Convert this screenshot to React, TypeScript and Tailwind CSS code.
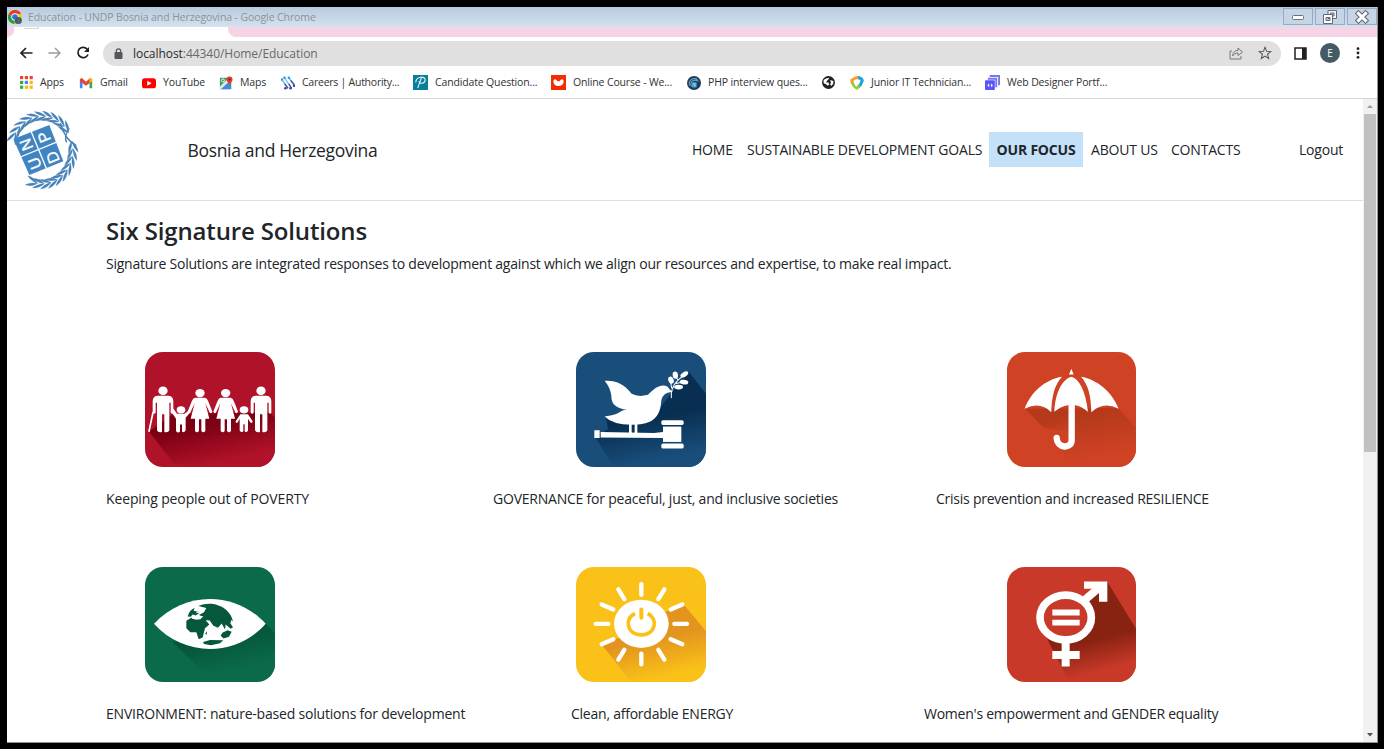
import React from "react";

type IconProps = { children: React.ReactNode; box?: string; className?: string };
const Glyph = ({ children, box = "0 0 16 16", className = "h-4 w-4" }: IconProps) => (
  <svg viewBox={box} className={`shrink-0 ${className}`} fill="none">{children}</svg>
);

function Laurel() {
  const leaves: React.ReactNode[] = [];
  const add = (from: number, to: number, n: number, dir: number, key: string) => {
    for (let i = 0; i < n; i++) {
      const a = from + ((to - from) * i) / (n - 1);
      const r = (a * Math.PI) / 180;
      const x = 126 + 92 * Math.cos(r);
      const y = 453 + 101 * Math.sin(r);
      leaves.push(
        <g key={key + i} transform={`translate(${x.toFixed(1)} ${y.toFixed(1)}) rotate(${a + 90 * dir + 180})`}>
          <path d="M-12 0 Q2 -15 22 -14 Q9 -2 -12 0ZM-12 0 Q2 15 22 14 Q9 2 -12 0Z" />
        </g>
      );
    }
  };
  add(204, 322, 10, 1, "a");
  add(-8, 106, 10, -1, "b");
  return <g fill="#4682b8" stroke="#4682b8" strokeWidth="1">{leaves}</g>;
}

const Logo = () => (
  <svg viewBox="21 330 216 243" className="h-[81px] w-[72px] shrink-0">
    <Laurel />
    <path d="M181 372Q194 422 229 440M208 388Q190 414 200 430" stroke="#4682b8" strokeWidth="4" fill="none" />
    <path d="M40 420L148 378L190 487L88 528Z" fill="#4084c2" />
    <path d="M94 399L139 508M61 474L168 430" stroke="#fff" strokeWidth="4" />
    <g fill="#fff" stroke="#fff" strokeWidth="1" fontFamily="Liberation Sans" fontSize="48" textAnchor="middle">
      <text transform="translate(120 487) rotate(-111)">U</text>
      <text transform="translate(94 431) rotate(-111)">N</text>
      <text transform="translate(174 469) rotate(-111)">D</text>
      <text transform="translate(148 408) rotate(-111)">P</text>
    </g>
  </svg>
);

const Tile = ({ x, w = 390, fill, id, children }: { x: number; w?: number; fill: string; id: string; children: React.ReactNode }) => (
  <svg viewBox={`${x} 36 ${w} 344`} preserveAspectRatio="none" className={w === 390 ? "h-[115px] w-[130px]" : "h-[115px] w-[129px]"}>
    <defs><clipPath id={id}><rect x={x} y="36" width={w} height="344" rx="54" /></clipPath></defs>
    <g clipPath={`url(#${id})`}>
      <rect x={x} y="36" width={w} height="344" fill={fill} />
      {children}
    </g>
  </svg>
);

const Fade = ({ id, from, to, y1, y2 }: { id: string; from: string; to: string; y1: number; y2: number }) => (
  <linearGradient id={id} gradientUnits="userSpaceOnUse" x1="240" y1={y1} x2="265" y2={y2}>
    <stop offset="0" stopColor={from} /><stop offset="1" stopColor={to} />
  </linearGradient>
);

const Man = ({ x }: { x: number }) => (
  <g transform={`translate(${x} 0)`}>
    <ellipse cx="0" cy="152" rx="14" ry="13" />
    <path d="M-17 167H17Q31 169 31 184V218Q28 224 23 218V188H19V270Q16 278 4 275V222H-3V275Q-15 278 -18 270V188H-22V218Q-27 224 -31 218V184Q-31 169 -17 167Z" />
  </g>
);
const Woman = ({ x }: { x: number }) => (
  <g transform={`translate(${x} 0)`}>
    <ellipse cx="0" cy="159" rx="14" ry="12" />
    <path d="M-15 173H15Q21 174 25 184L37 214Q34 222 29 217L16 189L28 236H16V272Q10 280 4 272V237H-3V272Q-9 280 -15 272V236H-28L-16 189L-29 217Q-34 222 -37 214L-25 184Q-21 174 -15 173Z" />
  </g>
);

const Poverty = () => (
  <Tile x={45} fill="#b01229" id="t1">
    <defs><Fade id="g1" from="#7b0013" to="#b01229" y1={250} y2={365} /></defs>
    <path d="M57 274L132 370L435 385V234L420 216L130 222Z" fill="url(#g1)" />
    <g fill="#fff">
      <Man x={99} /><Woman x={210} /><Woman x={287} /><Man x={393} />
      <ellipse cx="153" cy="209" rx="13" ry="11" />
      <path d="M130 205L141 221H164L177 210L181 216L167 233V271Q161 280 156 274V253H150V274Q143 280 138 272V236L124 215Z" />
      <ellipse cx="342" cy="209" rx="13" ry="11" />
      <path d="M331 222H354L368 243Q367 251 361 247L354 236V271Q349 279 344 273V252H340V273Q334 279 329 271V236L323 247Q316 251 317 243Z" />
      <path d="M69 217L57 273" stroke="#fff" strokeWidth="5" strokeLinecap="round" />
    </g>
  </Tile>
);

const Governance = () => (
  <Tile x={46} fill="#194e7b" id="t2">
    <defs><Fade id="g2" from="#082f51" to="#194e7b" y1={240} y2={365} /></defs>
    <path d="M104 292L160 380L440 385V166L384 94L300 200L136 232L142 266Z" fill="url(#g2)" />
    <g fill="#fff">
      <path d="M132 122C166 120 191 132 213 161Q233 172 262 164C283 143 301 130 321 140Q326 150 336 154L319 159Q302 166 301 190C298 226 278 250 231 253Q159 257 132 229Q160 226 174 218Q188 207 200 209C167 205 151 193 152 166Q148 141 132 122Z" />
      <path d="M205 250H213V278H205ZM222 250H230V278H222ZM101 270H117V293H101ZM120 275L280 278L307 275V293L120 292Z" />
      <rect x="302" y="240" width="67" height="14" rx="5" /><rect x="307" y="259" width="55" height="46" /><rect x="302" y="310" width="67" height="15" rx="5" />
      {[[371, 103, -32], [344, 105, 10], [331, 120, 20], [370, 126, 8], [354, 141, 0]].map(([x, y, a], i) => (
        <ellipse key={i} cx={x} cy={y} rx={i === 1 || i === 2 ? 8 : 13} ry={i === 1 || i === 2 ? 11 : 7} transform={`rotate(${i === 1 || i === 2 ? -a : a} ${x} ${y})`} />
      ))}
      <path d="M332 174Q328 144 352 120L376 100M333 144L329 122M352 120L345 108M345 130L370 126M338 140L354 141" stroke="#fff" strokeWidth="3" fill="none" />
    </g>
  </Tile>
);

const Resilience = () => (
  <Tile x={51} w={387} fill="#cf4224" id="t3">
    <defs>
      <Fade id="g3" from="#b5391b" to="#cf4224" y1={230} y2={360} />
      <Fade id="g3b" from="#b5391b" to="#cf4224" y1={215} y2={275} />
    </defs>
    <path d="M105 206L162 264L240 275V205Z" fill="url(#g3b)" />
    <path d="M205 322L250 375L440 380V266L384 203L250 205V310Z" fill="url(#g3)" />
    <path d="M104 206C121 158 165 118 216 110C193 135 185 170 184 216Q150 182 104 206ZM386 206C368 158 323 118 273 110C296 135 303 170 304 216Q340 182 386 206ZM244 110Q282 121 294 215Q276 198 256 195H234Q211 198 193 215C195 168 211 120 244 110ZM237 103L244 86L251 103Z" fill="#fff" />
    <path d="M245 192V300C245 326 202 326 200 293" stroke="#fff" strokeWidth="19" strokeLinecap="round" fill="none" />
  </Tile>
);

const Environment = () => (
  <Tile x={45} fill="#0b6a49" id="t4">
    <defs><Fade id="g4" from="#04543a" to="#0b6a49" y1={245} y2={355} /></defs>
    <path d="M125 258L240 370L440 365V240L408 206L260 270Z" fill="url(#g4)" />
    <path d="M72 206C164 106 318 108 407 206C318 307 160 305 72 206Z" fill="#fff" />
    <g fill="#06583d">
      <path d="M205 153C251 132 304 160 309 200L304 194L301 204L309 216L302 221L287 208L285 223L275 205L264 218L250 212L239 196L227 195L238 208L225 219L218 247L206 252L199 231L181 231L169 219V197L184 188L197 194L211 192L220 183L204 181L222 171L229 159Z" />
      <path d="M173 184Q178 164 194 159L191 167L204 170L195 174L208 173L198 181L187 178L183 185ZM277 233L293 225L305 230L297 245L281 250L272 242ZM219 260L240 254L280 255L270 264L243 270L222 266ZM225 236L231 228L230 239Z" />
    </g>
    <path d="M187 190L203 190M198 181L211 182" stroke="#fff" strokeWidth="3" />
  </Tile>
);

const Energy = () => (
  <Tile x={46} fill="#fac218" id="t5">
    <defs><Fade id="g5" from="#e3941f" to="#fac218" y1={260} y2={375} /></defs>
    <path d="M123 268L215 385H440V233L369 148L315 170L240 240L165 250Z" fill="url(#g5)" />
    <ellipse cx="242" cy="206" rx="82" ry="72" fill="#fff" />
    <path d="M242 87V119M242 295V327M105 206H143M341 206H379M173 103L191 132M311 103L293 132M123 148L158 163M365 148L330 163M123 267L158 252M365 267L330 252M173 313L191 284M311 313L293 284" stroke="#fff" strokeWidth="13" strokeLinecap="round" />
    <path d="M223 175C189 190 199 239 242 239S294 190 261 175" stroke="#fac218" strokeWidth="11" fill="none" />
    <path d="M242 163V188" stroke="#fac218" strokeWidth="12" strokeLinecap="round" />
  </Tile>
);

const Gender = () => (
  <Tile x={51} w={387} fill="#c83929" id="t6">
    <defs><Fade id="g6" from="#882211" to="#c83929" y1={272} y2={365} /></defs>
    <path d="M172 252L240 385H440V224L352 80L295 125L315 187L240 260Z" fill="url(#g6)" />
    <ellipse cx="227" cy="187" rx="77" ry="67" fill="#c83929" stroke="#fff" strokeWidth="23" />
    <path d="M285 134L334 92M227 259V334M187 299H269" stroke="#fff" strokeWidth="24" />
    <path d="M282 79H352V140H327V101H282ZM187 163H269V181H187ZM187 194H269V211H187Z" fill="#fff" />
  </Tile>
);

const Bookmark = ({ icon, label, className }: { icon: React.ReactNode; label?: string; className: string }) => (
  <div className={`flex shrink-0 items-center gap-[7px] ${className}`}>{icon}{label && <span className="whitespace-nowrap">{label}</span>}</div>
);

const Chrome = ({ className }: { className: string }) => (
  <Glyph className={className}>
    <circle cx="8" cy="8" r="8" fill="#fac116" />
    <path d="M1 4A8 8 0 0 1 15 4L8 5L5 9Z" fill="#e63b2e" />
    <path d="M1 4L5 10L8 12L7 16A8 8 0 0 1 1 4Z" fill="#269c4b" />
    <circle cx="8" cy="8" r="4.2" fill="#fff" /><circle cx="8" cy="8" r="3.2" fill="#2874dc" />
    <circle cx="11.8" cy="12" r="4" fill="#435966" /><path d="M11 10H13M11 12H13M11 14H13" stroke="#71858f" />
  </Glyph>
);

const bookmarks = [
  { label: "Apps", w: "w-[59px]", icon: <Glyph className="h-[13px] w-[13px]" box="0 0 13 13">
    {["#e94335", "#e94335", "#e94335", "#34a853", "#4285f4", "#fbbc04", "#34a853", "#fbbc04", "#fbbc04"].map((c, i) => <rect key={i} x={(i % 3) * 4.8} y={Math.floor(i / 3) * 4.8} width="3.2" height="3.2" fill={c} />)}
  </Glyph> },
  { label: "Gmail", w: "w-[63px]", icon: <Glyph className="h-[14px] w-[14px]">
    <path d="M1 14V4H4V14Z" fill="#4285f4" /><path d="M12 14V4H15V14Z" fill="#34a853" /><path d="M1 4L3 2L8 6.5L13 2L15 4V6L8 11L1 6Z" fill="#ea4335" /><path d="M12 5V3.5L13.5 2L15 4V6L12 8Z" fill="#fbbc04" />
  </Glyph> },
  { label: "YouTube", w: "w-[77px]", icon: <Glyph className="h-[14px] w-[14px]">
    <rect x="0" y="2.5" width="16" height="11.5" rx="3" fill="#f00" /><path d="M6 5.5L11 8.2L6 11Z" fill="#fff" />
  </Glyph> },
  { label: "Maps", w: "w-[62px]", icon: <Glyph className="h-[14px] w-[14px]">
    <rect x="1" y="2" width="13" height="13" fill="#34a05b" /><path d="M5 15L13 7V15Z" fill="#4285f4" /><path d="M1 12L11 2L14 5L4 15H1Z" fill="#e6e8df" /><path d="M2 15L13 5L14 7L6 15Z" fill="#4b84df" /><path d="M12 11C12 8 8.5 7 8.5 4A3.5 3.5 0 0 1 15.5 4C15.5 7 12 8 12 11Z" fill="#df3f31" /><circle cx="12" cy="4" r="1.2" fill="#8d1919" /><circle cx="4.5" cy="5" r="1.7" stroke="#fff" />
  </Glyph> },
  { label: "Careers | Authority...", w: "w-[132px] tracking-[-0.25px]", icon: <Glyph className="h-[14px] w-[14px]">
    <path d="M1 4L8 14M4 2L12 14M9 2L15 10" stroke="#67b9e9" strokeWidth="1.5" /><path d="M4 9L8 14M9 9L12 14M11 5L15 10" stroke="#4b4b9e" strokeWidth="1.5" />
    {[[1, 4], [4, 2], [9, 2]].map(([x, y], i) => <circle key={i} cx={x} cy={y} r="1.5" fill="#2b9ee1" />)}{[[5, 14], [11, 14], [15, 11]].map(([x, y], i) => <circle key={i} cx={x} cy={y} r="1.5" fill="#443f8e" />)}
  </Glyph> },
  { label: "Candidate Question...", w: "w-[138px]", icon: <Glyph className="h-[15px] w-[15px]">
    <path d="M0 0H16V16H0Z" fill="#087e99" /><path d="M3 8C3 1 13 1 13 5S8 10 6 7M9 3L5 14" stroke="#d5f3f7" strokeWidth="1.2" />
  </Glyph> },
  { label: "Online Course - We...", w: "w-[136px]", icon: <Glyph className="h-[15px] w-[15px]">
    <path d="M0 0H16V16H0Z" fill="#f32c04" /><path d="M2.5 6Q4 3.5 6 5.5Q8 8 10 5.5Q12 3.5 13.5 6Q13.5 11.8 8 11.8T2.5 6Z" fill="#fff" />
  </Glyph> },
  { label: "PHP interview ques...", w: "w-[135px]", icon: <Glyph className="h-[14px] w-[14px]">
    <circle cx="8" cy="8" r="8" fill="#203c54" /><path d="M3 11C1 5 7 1 12 4M5 12C3 6 8 3 13 6" stroke="#6ea6cb" strokeWidth="1.2" /><rect x="5.5" y="7" width="5.5" height="6" rx="1" fill="#46a2de" /><path d="M7 9H9V12" stroke="#a8dcff" />
  </Glyph> },
  { label: "", w: "w-[28px]", icon: <Glyph className="h-[13px] w-[13px]">
    <circle cx="8" cy="8" r="8" fill="#202124" /><path d="M2 5L5 3L9 2L8 4L6 6L5 8H8L9 10L7 12L5 10L2 9ZM10 5L14 6V9L12 12L10 11L11 8Z" fill="#fff" />
  </Glyph> },
  { label: "Junior IT Technician...", w: "w-[135px]", icon: <Glyph className="h-[14px] w-[14px]">
    <path d="M3 9L2 5Q7 1 11 2" stroke="#ff9e25" strokeWidth="3.5" /><path d="M9 2Q13 2 14 5L12 10L9 13" stroke="#16a9dd" strokeWidth="3.5" /><path d="M2 7L5 12L8 14L11 11" stroke="#9acd36" strokeWidth="3" />
  </Glyph> },
  { label: "Web Designer Portf...", w: "w-[140px]", icon: <Glyph className="h-[15px] w-[15px]">
    <path d="M5 0H16V11H14V2H5ZM3 3H13V13H11V5H3Z" fill="#7776ee" /><rect x="0" y="5.5" width="10.5" height="10.5" rx="1" fill="#5a54f5" /><path d="M4.5 9L2.5 11L4.5 13ZM6.5 9L8.5 11L6.5 13Z" fill="#fff" />
  </Glyph> },
];

function BrowserBars() {
  return <>
    <div className="flex h-5 shrink-0 items-center bg-linear-to-b from-[#b7cadd] to-[#d5e2ef] pl-px">
      <Chrome className="h-[14px] w-[14px]" />
      <span className="ml-[6px] pt-px font-['Open_Sans',sans-serif] text-[10.5px] tracking-[-0.1px] text-[#8d9399]">Education - UNDP Bosnia and Herzegovina - Google Chrome</span>
      <div className="ml-auto flex gap-[2px] self-stretch pt-px">
        <div className="flex h-[17px] w-[30px] items-center justify-center border border-[#99a9c3] bg-[#c5d5e6]"><Glyph className="h-3 w-4" box="0 0 16 12"><rect x="2.5" y="4.5" width="11" height="4" rx="1" fill="#fff" stroke="#687280" /></Glyph></div>
        <div className="flex h-[17px] w-[30px] items-center justify-center border border-[#99a9c3] bg-[#c5d5e6]"><Glyph><path d="M6 1.5H14.5V9.5H6ZM8.5 4H12V7H8.5Z" fill="#f3f6fa" stroke="#5f6977" fillRule="evenodd" /><path d="M1.5 5.5H10.5V14.5H1.5ZM4 8.5H8V11.5H4Z" fill="#fff" stroke="#5f6977" fillRule="evenodd" /></Glyph></div>
        <div className="flex h-[17px] w-[30px] items-center justify-center border border-[#99a9c3] bg-[#c5d5e6] pr-px"><Glyph className="h-[14px] w-[14px]"><path d="M4 4L12 12M12 4L4 12" stroke="#5f6977" strokeWidth="6" strokeLinecap="square" /><path d="M4 4L12 12M12 4L4 12" stroke="#fff" strokeWidth="3.6" strokeLinecap="square" /></Glyph></div>
      </div>
    </div>
    <div className="flex h-[10px] shrink-0 justify-between bg-white">
      <div className="w-[7px] rounded-br-lg bg-[#f7d4e5]" />
      <div className="mr-auto ml-[10px] h-[2px] w-[15px] border-r border-b border-[#d3d7e1]" />
      <div className="w-[1149px] rounded-bl-lg bg-[#f7d4e5]" />
    </div>
    <div className="flex h-[31px] shrink-0 items-center pt-px pl-[13px]">
      <Glyph className="h-3 w-[13px]" box="0 0 13 12"><path d="M12.5 6H1.2M6 1L1 6L6 11" stroke="#202124" strokeWidth="1.7" /></Glyph>
      <Glyph className="ml-[15px] h-3 w-[13px]" box="0 0 13 12"><path d="M0.5 6H11.8M7 1L12 6L7 11" stroke="#97999c" strokeWidth="1.4" /></Glyph>
      <Glyph className="ml-[15px] h-[14px] w-[14px]" box="0 0 14 14"><path d="M11.4 3.4A5.2 5.2 0 1 0 12 8.5" stroke="#202124" strokeWidth="1.7" /><path d="M13 1V6H8Z" fill="#202124" /></Glyph>
      <div className="ml-[13px] flex h-[25px] w-[1178px] items-center rounded-full bg-[#e0e0e0] pr-[9px] pl-[11px]">
        <Glyph className="h-[11px] w-[9px]" box="0 0 9 11"><rect x="0.5" y="4" width="8" height="7" rx="1" fill="#54575b" /><path d="M2.3 5V3A2.2 2.2 0 0 1 6.7 3V5" stroke="#54575b" strokeWidth="1.2" /></Glyph>
        <span className="ml-[10px] pt-px font-['Open_Sans',sans-serif] text-[12px] tracking-[-0.05px] text-[#66696c]"><span className="text-[#28292b]">localhost</span>:44340/Home/Education</span>
        <Glyph className="ml-auto h-[14px] w-[15px]" box="0 0 15 14"><path d="M3 5H1V13H12V10M3.5 10C4 6 6 4.5 9 4.5V2L13.5 6L9 9.5V7C6.5 7 5 8 3.5 10Z" stroke="#76787a" /></Glyph>
        <Glyph className="ml-[14px] h-[14px] w-[14px]"><path d="M8 1.5L9.8 6.1L14.7 6.4L10.9 9.5L12.2 14.3L8 11.6L3.8 14.3L5.1 9.5L1.3 6.4L6.2 6.1Z" stroke="#55585b" strokeWidth="1.2" /></Glyph>
      </div>
      <Glyph className="ml-[13px] h-[13px] w-[13px]" box="0 0 13 13"><rect x="1" y="1" width="11" height="11" stroke="#202124" strokeWidth="1.5" /><path d="M8 1H12V12H8Z" fill="#202124" /></Glyph>
      <div className="ml-[13px] flex h-5 w-5 items-center justify-center rounded-full bg-[#445b66] font-['Open_Sans',sans-serif] text-[10px] text-white">E</div>
      <Glyph className="ml-[16px] h-3 w-[4px]" box="0 0 4 12"><circle cx="2" cy="1.7" r="1.4" fill="#202124" /><circle cx="2" cy="6" r="1.4" fill="#202124" /><circle cx="2" cy="10.3" r="1.4" fill="#202124" /></Glyph>
    </div>
    <div className="flex h-[31px] shrink-0 items-center border-b border-[#d5d6d8] pb-px pl-[13px] font-['Open_Sans',sans-serif] text-[10.5px] tracking-[-0.15px] text-[#303236]">
      {bookmarks.map((b) => <Bookmark key={b.w + b.label} icon={b.icon} label={b.label} className={b.w} />)}
    </div>
  </>;
}

export default function App() {
  return (
    <div className="flex h-[749px] w-[1384px] bg-black pt-[7px] pr-[6px] pb-[6px] pl-[7px] font-['Open_Sans','Noto_Sans',sans-serif] text-[#212529]">
      <div className="flex min-w-0 flex-1 flex-col border-r border-b border-[#929292] bg-white">
        <BrowserBars />
        <div className="flex min-h-0 flex-1">
          <main className="min-w-0 flex-1 overflow-hidden text-[14px] tracking-[-0.24px] whitespace-nowrap">
            <header className="flex h-[102px] items-center border-b border-[#dee0e2]">
              <Logo />
              <div className="ml-[108.5px] w-[504.5px] pt-px text-[17.5px] tracking-[-0.32px]">Bosnia and Herzegovina</div>
              <nav className="flex items-center tracking-[-0.2px]">
                <span className="w-[55px]">HOME</span>
                <span className="w-[242px]">SUSTAINABLE DEVELOPMENT GOALS</span>
                <span className="flex h-[35px] w-[94px] items-center justify-center bg-[#c3e1f8] font-bold">OUR FOCUS</span>
                <span className="ml-2 w-[80px]">ABOUT US</span>
                <span className="w-[128px]">CONTACTS</span>
                <span>Logout</span>
              </nav>
            </header>
            <section className="pl-[99px]">
              <h1 className="pt-[12px] text-[24px] leading-9 font-semibold tracking-[-0.15px]">Six Signature Solutions</h1>
              <p className="mt-[5px] leading-5">Signature Solutions are integrated responses to development against which we align our resources and expertise, to make real impact.</p>
              <div className="mt-[78px] grid grid-cols-[430.5px_431.5px_200px] pl-[39px]"><Poverty /><Governance /><Resilience /></div>
              <div className="mt-[22px] grid grid-cols-[387px_443px_400px] leading-5"><span className="tracking-[-0.13px]">Keeping people out of POVERTY</span><span className="tracking-[-0.22px]">GOVERNANCE for peaceful, just, and inclusive societies</span><span>Crisis prevention and increased RESILIENCE</span></div>
              <div className="mt-[58px] grid grid-cols-[430.5px_431.5px_200px] pl-[39px]"><Environment /><Energy /><Gender /></div>
              <div className="mt-[22px] grid grid-cols-[465px_353px_400px] leading-5"><span className="tracking-[-0.2px]">ENVIRONMENT: nature-based solutions for development</span><span>Clean, affordable ENERGY</span><span>Women's empowerment and GENDER equality</span></div>
            </section>
          </main>
          <aside className="flex w-[14px] flex-col items-center bg-[#f1f1f1]">
            <Glyph className="h-[15px] w-[8px]" box="0 0 8 15"><path d="M1 9L4 6L7 9Z" fill="#9b9b9b" /></Glyph>
            <div className="h-[338px] w-[12px] bg-[#c1c1c1]" />
            <Glyph className="mt-auto h-[14px] w-[8px]" box="0 0 8 14"><path d="M1 5L4 8.5L7 5Z" fill="#505050" /></Glyph>
          </aside>
        </div>
      </div>
    </div>
  );
}
